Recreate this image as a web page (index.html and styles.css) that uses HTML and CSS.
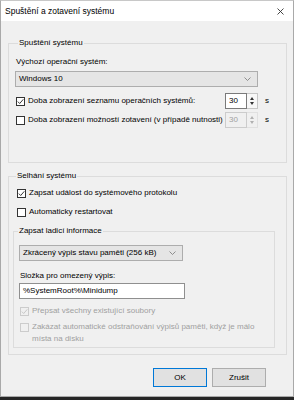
FILE: index.html
```html
<!DOCTYPE html>
<html>
  <head>
    <meta name="viewport" content="width=device-width, initial-scale=1">
    <link rel="stylesheet" href="styles.css">
  </head>
  <body>
    <div class="window">
      <div class="titlebar">
        <span class="title">Spuštění a zotavení systému</span>
        <svg class="close" width="7" height="7" viewBox="0 0 7 7"><path d="M0.5 0.5 L6.5 6.5 M6.5 0.5 L0.5 6.5" stroke="#333" stroke-width="0.9" fill="none"/></svg>
      </div>

      <div class="content">
        <!-- startup -->
        <div class="group g-start">
          <span class="legend">Spuštění systému</span>
          <div class="label first">Výchozí operační systém:</div>
          <div class="combo combo-os">
            <span>Windows 10</span>
            <svg width="7" height="4" viewBox="0 0 7 4"><path d="M0.5 0.5 L3.5 3.5 L6.5 0.5" stroke="#777" stroke-width="0.8" fill="none"/></svg>
          </div>

          <div class="row row-1">
            <span class="check"><span class="box"><svg width="7" height="7" viewBox="0 0 7 7"><path d="M0.8 3.6 L2.7 5.5 L6.3 1.3" stroke="#222" stroke-width="0.9" fill="none"/></svg></span>Doba zobrazení seznamu operačních systémů:</span>
            <div class="spin">
              <span class="val">30</span>
              <span class="arrows"><i class="up"></i><i class="down"></i></span>
            </div>
            <span class="unit">s</span>
          </div>

          <div class="row row-2">
            <span class="check"><span class="box"></span>Doba zobrazení možností zotavení (v případě nutnosti)</span>
            <div class="spin off">
              <span class="val">30</span>
              <span class="arrows"><i class="up"></i><i class="down"></i></span>
            </div>
            <span class="unit">s</span>
          </div>
        </div>

        <!-- failure -->
        <div class="group g-fail">
          <span class="legend">Selhání systému</span>
          <div class="check line c-log"><span class="box"><svg width="7" height="7" viewBox="0 0 7 7"><path d="M0.8 3.6 L2.7 5.5 L6.3 1.3" stroke="#222" stroke-width="0.9" fill="none"/></svg></span>Zapsat událost do systémového protokolu</div>
          <div class="check line c-restart"><span class="box"></span>Automaticky restartovat</div>

          <div class="group g-debug">
            <span class="legend">Zapsat ladicí informace</span>
            <div class="combo combo-dump">
              <span>Zkrácený výpis stavu paměti (256 kB)</span>
              <svg width="7" height="4" viewBox="0 0 7 4"><path d="M0.5 0.5 L3.5 3.5 L6.5 0.5" stroke="#777" stroke-width="0.8" fill="none"/></svg>
            </div>
            <div class="label dir">Složka pro omezený výpis:</div>
            <div class="textbox">%SystemRoot%\Minidump</div>
            <div class="check line off c-over"><span class="box"><svg width="7" height="7" viewBox="0 0 7 7"><path d="M0.8 3.6 L2.7 5.5 L6.3 1.3" stroke="#c4c4c4" stroke-width="0.9" fill="none"/></svg></span>Přepsat všechny existující soubory</div>
            <div class="check line off c-auto"><span class="box"></span><span>Zakázat automatické odstraňování výpisů paměti, když je málo místa na disku</span></div>
          </div>
        </div>

        <div class="buttons">
          <button class="btn default">OK</button>
          <button class="btn">Zrušit</button>
        </div>
      </div>
    </div>
  </body>
</html>
```

FILE: styles.css
```css
* {
  box-sizing: border-box;
}

body {
  margin: 0;
  background: #262626;
  font-family: "Liberation Sans", Arial, sans-serif;
  font-size: 8px;
  line-height: 12px;
  color: #000;
}

.window {
  width: 294px;
  height: 397px;
  border: 1px solid #a9a9a9;
  border-top-color: #c8c8c8;
  background: #f0f0f0;
}

.titlebar {
  height: 20px;
  background: #fff;
  display: flex;
  align-items: center;
  justify-content: space-between;
  padding: 0 9px 0 4px;
}

.title {
  font-size: 8.5px;
}

.content {
  padding-top: 22px;
}

/* group boxes */
.group {
  border: 1px solid #dcdcdc;
  margin: 0 6px 0 7px;
}

.legend {
  display: table;
  background: #f0f0f0;
  padding: 0 1px;
  margin: -7px 0 0 3px;
  height: 12px;
}

.g-start {
  padding: 0 8px 34px 6px;
}

.g-fail {
  margin-top: 13px;
  padding: 0 11px 0 4px;
}

.g-fail > .legend {
  margin-left: 3px;
}

.g-debug {
  margin: 13px 0 6px 0;
  padding: 0 0 2px 5px;
}

.g-debug > .legend {
  margin-left: -1px;
}

.label {
  padding-left: 1px;
}

.label.first {
  margin-top: 7px;
}

.label.dir {
  margin-top: 9px;
}

/* combos */
.combo {
  height: 16px;
  background: #e5e5e5;
  border: 1px solid #adadad;
  display: flex;
  align-items: center;
  justify-content: space-between;
  padding: 0 6px 0 3px;
}

.combo-os {
  margin-top: 3px;
  width: 243px;
}

.combo-dump {
  margin-top: 8px;
  width: 164px;
}

.textbox {
  margin-top: 1px;
  width: 166px;
  height: 16px;
  background: #fff;
  border: 1px solid #8f8f8f;
  padding: 1px 0 0 3px;
}

/* checkboxes */
.check {
  display: flex;
  align-items: center;
}

.box {
  flex: none;
  width: 9px;
  height: 9px;
  border: 1px solid #333;
  background: #fff;
  margin: 0 3px 0 1px;
  display: flex;
  align-items: center;
  justify-content: center;
}

.check.line {
  margin-left: 3px;
}

.c-log {
  margin-top: 5px;
}

.c-restart {
  margin-top: 7px;
}

.off {
  color: #a0a0a0;
}

.off .box {
  border-color: #cccccc;
  background: #f0f0f0;
}

.c-over {
  margin-top: 6px;
  margin-left: 0 !important;
}

.c-auto {
  margin-top: 4px;
  margin-left: 0 !important;
  align-items: flex-start;
  width: 245px;
}

.c-auto .box {
  margin-top: 2px;
}

/* spinner rows */
.row {
  display: flex;
  align-items: center;
  height: 16px;
}

.row-1 {
  margin-top: 6px;
}

.row-2 {
  margin-top: 3px;
}

.row .check {
  flex: 1;
  white-space: nowrap;
}

.spin {
  display: flex;
  width: 33px;
  height: 16px;
}

.spin .val {
  width: 22px;
  background: #fff;
  border: 1px solid #7a7a7a;
  padding: 1px 0 0 3px;
}

.spin .arrows {
  width: 11px;
  border: 1px solid #c6c6c6;
  border-left: none;
  background: #f7f7f7;
  display: flex;
  flex-direction: column;
  align-items: center;
  justify-content: space-around;
  padding: 2px 0;
}

.spin i {
  display: block;
  width: 0;
  height: 0;
  border-left: 2px solid transparent;
  border-right: 2px solid transparent;
}

.spin i.up {
  border-bottom: 3px solid #333;
}

.spin i.down {
  border-top: 3px solid #333;
}

.spin.off .val {
  background: #f0f0f0;
  border-color: #cccccc;
  color: #a0a0a0;
}

.spin.off .arrows {
  border-color: #e0e0e0;
  background: #f0f0f0;
}

.spin.off i.up {
  border-bottom-color: #b0b0b0;
}

.spin.off i.down {
  border-top-color: #b0b0b0;
}

.unit {
  width: 20px;
  padding-left: 7px;
}

/* buttons */
.buttons {
  display: flex;
  justify-content: flex-end;
  gap: 5px;
  margin-top: 13px;
  padding-right: 27px;
}

.btn {
  width: 54px;
  height: 19px;
  background: #e1e1e1;
  border: 1px solid #adadad;
  font-family: "Liberation Sans", Arial, sans-serif;
  font-size: 8px;
  color: #000;
  padding: 0;
}

.btn.default {
  border-color: #0078d7;
}
```
